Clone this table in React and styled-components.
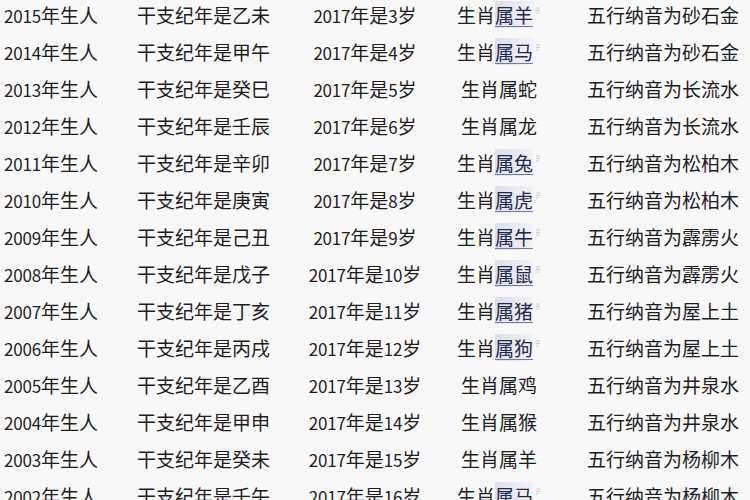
import styled, { createGlobalStyle } from "styled-components";

const GlobalStyle = createGlobalStyle`
  html, body {
    margin: 0;
    padding: 0;
    background: #f8f8f8;
    overflow: hidden;
  }
  body {
    width: 750px;
    height: 500px;
    font-family: "Noto Sans CJK SC", "Noto Sans", sans-serif;
  }
`;

const rows = [
  ["2015", "乙未", 3, "羊", true, "砂石金"],
  ["2014", "甲午", 4, "马", true, "砂石金"],
  ["2013", "癸巳", 5, "蛇", false, "长流水"],
  ["2012", "壬辰", 6, "龙", false, "长流水"],
  ["2011", "辛卯", 7, "兔", true, "松柏木"],
  ["2010", "庚寅", 8, "虎", true, "松柏木"],
  ["2009", "己丑", 9, "牛", true, "霹雳火"],
  ["2008", "戊子", 10, "鼠", true, "霹雳火"],
  ["2007", "丁亥", 11, "猪", true, "屋上土"],
  ["2006", "丙戌", 12, "狗", true, "屋上土"],
  ["2005", "乙酉", 13, "鸡", false, "井泉水"],
  ["2004", "甲申", 14, "猴", false, "井泉水"],
  ["2003", "癸未", 15, "羊", false, "杨柳木"],
  ["2002", "壬午", 16, "马", true, "杨柳木"],
];

const Table = styled.div`
  display: grid;
  grid-template-columns: 105px 195px 130px 138px 182px;
  grid-auto-rows: 37px;
  margin-top: -4px;
  color: #1e1e1e;
  font-size: 19px;
  line-height: 37px;
  white-space: nowrap;
`;

const Row = styled.div`
  display: contents;
`;

const Cell = styled.div`
  text-align: ${(p) => p.$align || "center"};
  padding-left: ${(p) => p.$pad || 0}px;
`;

const Num = styled.span`
  font-size: 17px;
  letter-spacing: -0.2px;
`;

const Link = styled.span`
  color: #222a4a;
  text-decoration: underline;
  text-decoration-color: #6f7aa6;
  text-underline-offset: 3px;
  background: linear-gradient(90deg, rgba(110, 120, 190, 0.2), rgba(110, 120, 190, 0.04));
`;

const Mark = styled.svg`
  width: 6px;
  height: 8px;
  margin-left: 2px;
  vertical-align: 8px;
`;

const LinkMark = () => (
  <Mark viewBox="0 0 6 8">
    <path d="M1 1 L5 1 M1 3.5 L5 3.5 M1 6 L4 6" stroke="#c8c8cc" strokeWidth="1.2" fill="none" />
  </Mark>
);

export default function App() {
  return (
    <>
      <GlobalStyle />
      <Table>
        {rows.map(([year, ganzhi, age, animal, linked, nayin]) => (
          <Row key={year}>
            <Cell $align="left" $pad={4}>
              <Num>{year}</Num>年生人
            </Cell>
            <Cell $align="left" $pad={32}>
              干支纪年是{ganzhi}
            </Cell>
            <Cell>
              <Num>2017</Num>年是<Num>{age}</Num>岁
            </Cell>
            <Cell>
              生肖
              {linked ? (
                <>
                  <Link>属{animal}</Link>
                  <LinkMark />
                </>
              ) : (
                <>属{animal}</>
              )}
            </Cell>
            <Cell $align="left" $pad={19}>
              五行纳音为{nayin}
            </Cell>
          </Row>
        ))}
      </Table>
    </>
  );
}
